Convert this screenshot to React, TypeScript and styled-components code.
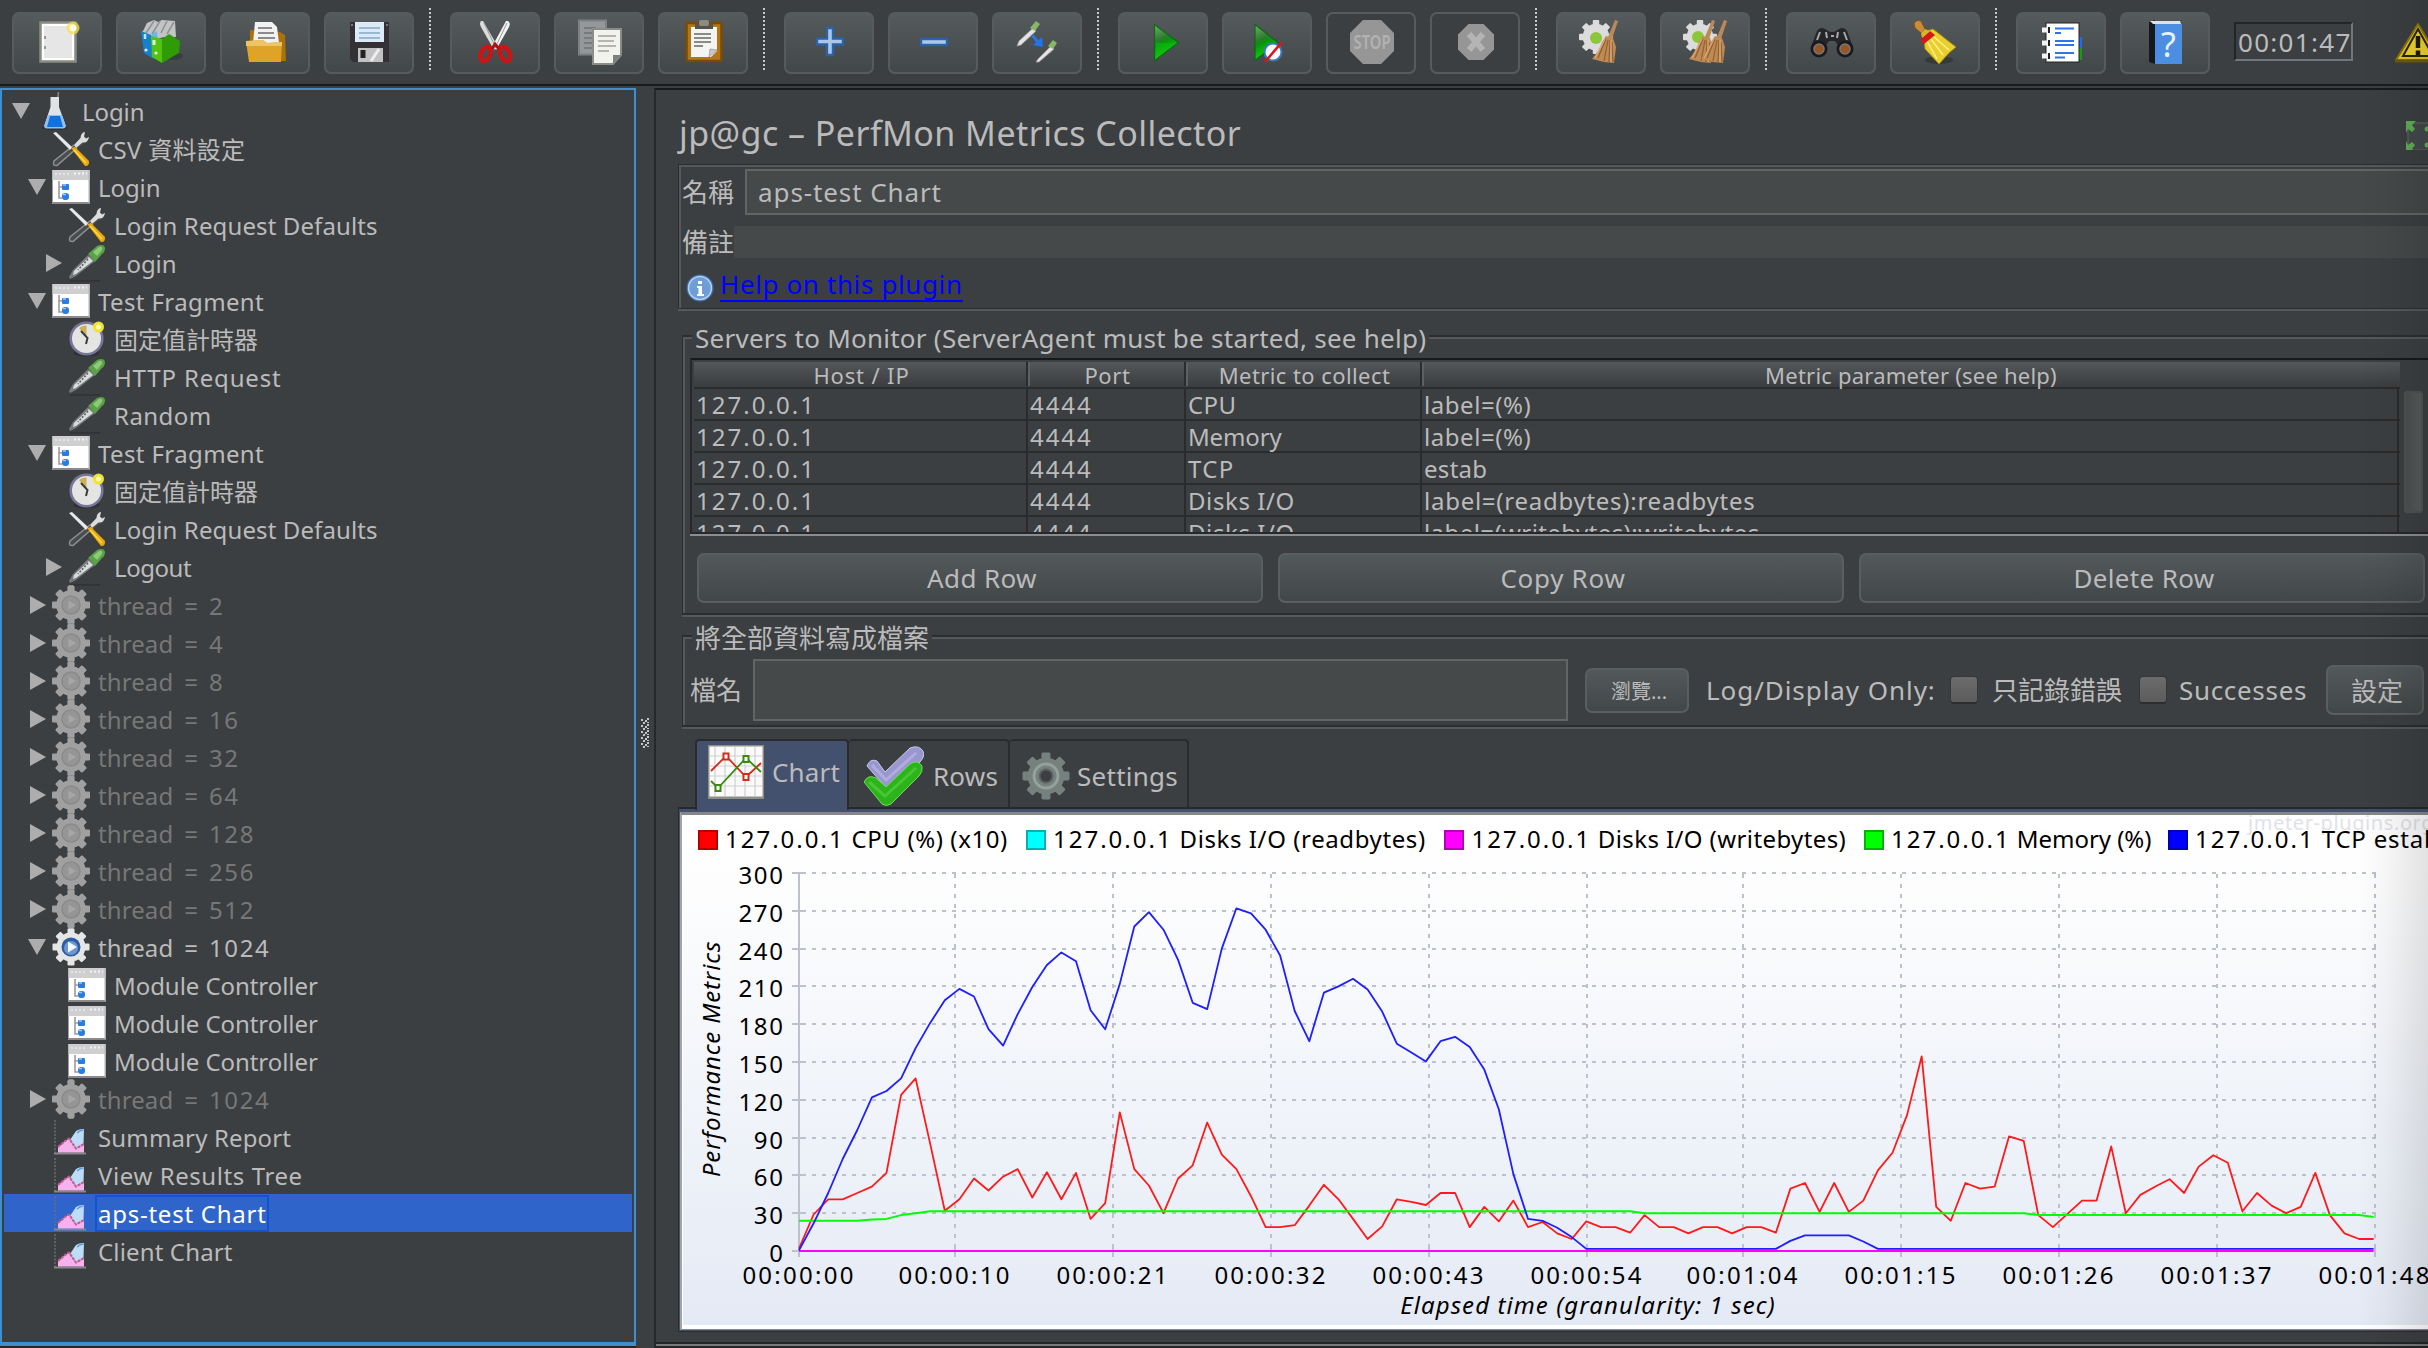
import React from 'react';
import styled, { createGlobalStyle, css } from 'styled-components';

/* ---------- theme ---------- */
const C = {
  bg: '#3c3f41',
  text: '#bbbbbb',
  muted: '#777777',
  dark: '#2b2d2f',
  light: '#55595c',
  field: '#45494a',
  fieldBorder: '#646464',
  focus: '#3e8fd0',
  select: '#2f65ca',
  grid: '#bcc1cd',
};
const FONT = '"Noto Sans", "Noto Sans CJK TC", sans-serif';

const Global = createGlobalStyle`
  html, body { margin: 0; padding: 0; background: ${C.bg}; overflow: hidden; }
  * { box-sizing: border-box; }
`;

const Frame = styled.div`
  position: relative;
  width: 2428px;
  height: 1348px;
  overflow: hidden;
  display: flex;
  flex-direction: column;
  background: ${C.bg};
  color: ${C.text};
  font-family: ${FONT};
  font-size: 26px;
  white-space: nowrap;
`;

const EdgeShade = styled.div`
  position: absolute;
  top: 0;
  right: 0;
  bottom: 0;
  width: 70px;
  pointer-events: none;
  background: linear-gradient(to right, rgba(0, 0, 0, 0), rgba(0, 0, 0, 0.03) 40%, rgba(0, 0, 0, 0.11));
`;

const Label = styled.span<{ $ls?: number; $size?: number }>`
  font-size: ${(p) => p.$size ?? 26}px;
  letter-spacing: ${(p) => p.$ls ?? 0}px;
`;

/* ---------- toolbar ---------- */
const Toolbar = styled.div`
  flex: none;
  display: flex;
  align-items: flex-start;
  height: 86px;
  padding: 12px 0 0 12px;
  border-bottom: 2px solid #191b1d;
`;
const ButtonGroup = styled.div`
  flex: none;
  display: flex;
  gap: 14px;
`;
const ToolButton = styled.button<{ $disabled?: boolean }>`
  width: 90px;
  height: 62px;
  padding: 0;
  display: flex;
  align-items: center;
  justify-content: center;
  border: 2px solid #575b5c;
  border-radius: 7px;
  background: ${(p) => (p.$disabled ? 'transparent' : 'linear-gradient(#555a5c, #424849)')};
`;
const Separator = styled.div`
  flex: none;
  width: 2px;
  height: 62px;
  margin: -4px 19px 0 15px;
  background: repeating-linear-gradient(#c9c9c9 0 2px, transparent 2px 4px);
`;
const Timer = styled.div`
  flex: none;
  width: 119px;
  height: 39px;
  margin: 10px 42px 0 24px;
  padding-left: 2px;
  border: 2px solid #232526;
  border-right-color: #70777a;
  border-bottom-color: #70777a;
  font-size: 26px;
  line-height: 36px;
  letter-spacing: 1.3px;
`;
const WarningBox = styled.div`
  flex: none;
  margin-top: 10px;
  height: 42px;
`;

/* ---------- body ---------- */
const Body = styled.div`
  display: flex;
  height: 1262px;
  padding-top: 2px;
`;
const Tree = styled.div`
  flex: none;
  width: 636px;
  height: 1258px;
  padding: 2px;
  border: 2px solid ${C.focus};
  border-bottom-width: 4px;
  box-shadow: 0 2px 0 #232526;
`;
const TreeRow = styled.div<{ $depth: number; $selected?: boolean; $muted?: boolean }>`
  display: flex;
  align-items: center;
  height: 38px;
  padding-left: ${(p) => 8 + 16 * p.$depth}px;
  background: ${(p) => (p.$selected ? C.select : 'transparent')};
  color: ${(p) => (p.$selected ? '#ffffff' : p.$muted ? C.muted : C.text)};
`;
const ArrowSlot = styled.div`
  flex: none;
  width: 18px;
  height: 18px;
  margin-right: 6px;
`;
const IconSlot = styled.div`
  flex: none;
  width: 38px;
  height: 38px;
`;
const TreeText = styled.div<{ $ls: number; $ws?: number; $selected?: boolean }>`
  height: 37px;
  line-height: 38px;
  margin-left: 5px;
  padding: 0 2px 0 3px;
  font-size: 24px;
  letter-spacing: ${(p) => p.$ls}px;
  word-spacing: ${(p) => p.$ws ?? 0}px;
  ${(p) => p.$selected && css`box-shadow: inset 0 0 0 2px #1352d4;`}
`;
const Digits = styled.span`
  letter-spacing: 1.6px;
`;
const Divider = styled.div`
  flex: none;
  width: 18px;
  display: flex;
  align-items: center;
  justify-content: center;
  padding-top: 29px;
`;

const Main = styled.div`
  flex: 1;
  min-width: 0;
  height: 1260px;
  overflow: hidden;
  padding-left: 22px;
  border-left: 2px solid #26282a;
  border-top: 2px solid #17191b;
  border-bottom: 2px solid #232526;
  box-shadow: inset 0 -2px 0 #77797c, inset 0 -4px 0 #232526;
  display: flex;
  flex-direction: column;
`;
const TitleBar = styled.div`
  flex: none;
  display: flex;
  height: 74px;
  padding: 12px 0 0 1px;
  line-height: 62px;
`;
const Expand = styled.div`
  margin-left: auto;
  margin-top: 12px;
  width: 22px;
  height: 36px;
  overflow: hidden;
`;
const HeaderBox = styled.div`
  flex: none;
  height: 145px;
  width: 1800px;
  padding: 4px 0 0 3px;
  border: 1px solid ${C.dark};
  box-shadow: inset 2px 2px 0 ${C.light}, 0 2px 0 ${C.light};
`;
const FieldRow = styled.div<{ $h: number; $mt?: number }>`
  display: flex;
  align-items: center;
  height: ${(p) => p.$h}px;
  margin-top: ${(p) => p.$mt ?? 0}px;
`;
const FieldLabel = styled.div`
  flex: none;
  width: 52px;
  line-height: 32px;
  font-size: 26px;
`;
const NameField = styled.div`
  flex: 1;
  height: 46px;
  margin-left: 11px;
  padding-left: 11px;
  line-height: 43px;
  border: 2px solid ${C.fieldBorder};
  background: ${C.field};
`;
const CommentField = styled.div`
  flex: 1;
  height: 32px;
  background: ${C.field};
`;
const HelpRow = styled.div`
  display: flex;
  margin-top: 11px;
  padding-left: 4px;
  gap: 6px;
  & svg { margin-top: 5px; }
`;
const HelpLink = styled.a`
  color: #0000ff;
  height: 33px;
  line-height: 30px;
  letter-spacing: 0.62px;
  border-bottom: 2px solid #0000ff;
`;

const Group = styled.div<{ $h: number; $mt: number }>`
  flex: none;
  display: flex;
  flex-direction: column;
  align-items: flex-start;
  width: 1780px;
  height: ${(p) => p.$h}px;
  margin: ${(p) => p.$mt}px 0 0 4px;
  border: solid ${C.dark};
  border-width: 2px 1px 2px 1px;
  box-shadow: inset 2px 2px 0 ${C.light}, 0 2px 0 ${C.light};
`;
const Legend = styled.div`
  flex: none;
  height: 30px;
  line-height: 31px;
  margin: -14px 0 0 9px;
  padding: 0 3px 0 3px;
  background: ${C.bg};
`;

/* ---------- table ---------- */
const TableFrame = styled.div`
  flex: none;
  display: flex;
  width: 1738px;
  height: 176px;
  margin: 5px 0 0 7px;
  padding: 2px 0 0 2px;
  overflow: hidden;
  border: solid #26282a;
  border-width: 2px 0 2px 2px;
  border-top-color: #17191b;
`;
const TableEdge = styled.div`
  flex: none;
  width: 1738px;
  height: 2px;
  margin-left: 7px;
  background: #8b8d90;
`;
const TableGrid = styled.div`
  flex: none;
  width: 1706px;
`;
const COLS = '334px 158px 236px 978px';
const HeadRow = styled.div`
  display: grid;
  grid-template-columns: ${COLS};
  height: 27px;
  background: linear-gradient(#54585b, #3a3c3e);
  border-bottom: 2px solid #2a2c2d;
`;
const HeadCell = styled.div<{ $ls: number; $last?: boolean }>`
  height: 24px;
  line-height: 27px;
  padding-left: ${(p) => (p.$last ? 0 : 3)}px;
  text-align: center;
  font-size: 22px;
  letter-spacing: ${(p) => p.$ls}px;
  ${(p) => !p.$last && css`border-right: 2px solid #2a2c2d; box-shadow: 2px 0 0 #5c6063;`}
`;
const BodyRow = styled.div`
  display: grid;
  grid-template-columns: ${COLS};
  height: 32px;
  border-bottom: 2px solid #2b2b2b;
`;
const Cell = styled.div<{ $ls: number; $last?: boolean }>`
  height: 30px;
  line-height: 32px;
  padding-left: 2px;
  font-size: 24px;
  letter-spacing: ${(p) => p.$ls}px;
  border-right: 2px solid #2b2b2b;
  ${(p) => p.$last && css`margin-right: 1px;`}
`;
const Scroll = styled.div`
  flex: none;
  width: 30px;
  padding: 29px 0 0 4px;
`;
const Thumb = styled.div`
  width: 19px;
  height: 122px;
  border: 2px solid #4f5253;
  border-radius: 3px;
  background: linear-gradient(to right, #4c4e50, #595b5c);
`;

const RowButtons = styled.div`
  display: flex;
  gap: 15px;
  margin: 17px 0 0 14px;
`;
const Button = styled.button<{ $w: number; $h: number; $ml?: number }>`
  flex: none;
  width: ${(p) => p.$w}px;
  height: ${(p) => p.$h}px;
  margin: 0 0 0 ${(p) => p.$ml ?? 0}px;
  padding: 0 0 0 4px;
  color: ${C.text};
  font-family: ${FONT};
  border: 2px solid #5a5e5f;
  border-radius: 7px;
  background: linear-gradient(#53585a, #424849);
`;
const FileRow = styled.div`
  display: flex;
  align-items: center;
  height: 62px;
  margin: 6px 0 0 7px;
`;
const FileField = styled.div`
  flex: none;
  width: 815px;
  height: 62px;
  margin-left: 11px;
  border: 2px solid ${C.fieldBorder};
  background: ${C.field};
`;
const Spaced = styled.div<{ $w: number; $ml: number }>`
  flex: none;
  width: ${(p) => p.$w}px;
  margin-left: ${(p) => p.$ml}px;
  line-height: 62px;
`;
const Check = styled.div<{ $ml: number }>`
  flex: none;
  width: 28px;
  height: 28px;
  margin-left: ${(p) => p.$ml}px;
  border-radius: 4px;
  border: 1px solid #343638;
  border-bottom: 2px solid #2b2d2e;
  background: linear-gradient(#6c6c6c, #5c5c5c);
`;

/* ---------- tabs ---------- */
const Tabs = styled.div`
  flex: none;
  display: flex;
  height: 68px;
  margin: 12px 0 0 17px;
`;
const Tab = styled.div<{ $w: number; $active?: boolean; $gap: number; $pl: number }>`
  flex: none;
  display: flex;
  align-items: center;
  gap: ${(p) => p.$gap}px;
  width: ${(p) => p.$w}px;
  padding-top: 4px;
  padding-left: ${(p) => p.$pl}px;
  border: 2px solid #292b2d;
  border-bottom: 0;
  border-left-width: ${(p) => (p.$active ? 2 : 0)}px;
  border-radius: 4px 4px 0 0;
  background: ${(p) => (p.$active ? '#43506e' : C.bg)};
  ${(p) => p.$active && css`height: 71px; z-index: 1; padding-top: 0; padding-bottom: 7px;`}
`;
const Pane = styled.div`
  flex: none;
  width: 1760px;
  height: 525px;
  padding: 3px 0 0 1px;
  border: 1px solid ${C.dark};
  border-top: 2px solid #26282a;
  background: #43506e;
`;
const ChartFrame = styled.div`
  width: 1750px;
  height: 518px;
  border: solid #86868c;
  border-width: 3px 0 1px 2px;
  border-left-color: #a4a4a8;
  background: #ffffff;
  & svg { display: block; }
`;

/* ---------- toolbar icons (48 x 48) ---------- */
const Svg48 = ({ children }: { children: React.ReactNode }) => (
  <svg width="48" height="48" viewBox="0 0 48 48">{children}</svg>
);
const Cog = ({ cx, cy, r, fill, hole, n = 8 }: { cx: number; cy: number; r: number; fill: string; hole?: string; n?: number }) => (
  <g transform={`translate(${cx} ${cy})`}>
    {Array.from({ length: n }, (_, i) => (
      <rect key={i} x={-r * 0.19} y={-r} width={r * 0.38} height={r * 0.5} rx={r * 0.06} fill={fill} transform={`rotate(${(i * 360) / n})`} />
    ))}
    <circle r={r * 0.78} fill={fill} />
    {hole && <circle r={r * 0.4} fill={hole} />}
  </g>
);
const Broomlet = ({ x }: { x: number }) => (
  <g transform={`translate(${x} 0)`}>
    <path d="M36 1 L39 2 L33 20 L29 18 Z" fill="#b98a58" />
    <path d="M27 17 L34 19 L37 28 L35 44 L25 43 L13 40 Q20 32 23 23 Z" fill="#c08a55" />
    <path d="M27 20 L19 39 M29 21 L25 42 M31 21 L30 43 M33 23 L34 43" stroke="#8f6133" strokeWidth="1.2" fill="none" />
    <path d="M26 20 L16 39 M32 21 L32 43" stroke="#e0b283" strokeWidth="1" fill="none" />
  </g>
);

const ICONS: Record<string, React.ReactNode> = {
  new: (
    <>
      <rect x="7.500" y="3.500" width="35" height="39" fill="#f1f1f1" stroke="#8a8c82" strokeWidth="2.500" />
      <rect x="10" y="6" width="30" height="34" fill="#e6e6e6" stroke="#ffffff" strokeWidth="2" />
      <path d="M12 17v3M12 27v3" stroke="#999" strokeWidth="2" />
      <circle cx="40" cy="9" r="6.500" fill="#f3e14a" opacity="0.75" />
      <circle cx="40" cy="9" r="3.500" fill="#fffbe0" />
    </>
  ),
  templates: (
    <>
      <ellipse cx="36" cy="37" rx="10" ry="4" fill="#2c2f30" opacity="0.5" />
      <path d="M6 12 L10 4 L17 1 L21 3 L25 1 L38 2 L39 18 L28 18 L18 20 L4 13 Z" fill="#c2c4c6" />
      <path d="M9 14L17 2M15 15L23 2M24 14L30 2M30 15L37 3" stroke="#8f9294" strokeWidth="1.500" />
      <path d="M4 12 L14 16 L17 40 L7 34 Z" fill="#1481cf" />
      <path d="M14 16 L20 12 L21 24 L16 36 Z" fill="#64b8ee" />
      <path d="M14 17 L25 20 L25 44 L15 38 Z" fill="#52c40e" />
      <path d="M25 20 L32 15 L43 22 L42 34 L25 44 Z" fill="#2f9c06" />
      <path d="M17 21v5" stroke="#d8ffd0" strokeWidth="3" />
      <path d="M8 15v5" stroke="#bfe4ff" strokeWidth="2.500" />
      <circle cx="19" cy="34" r="1.600" fill="#e6ffe0" /><circle cx="9" cy="31" r="1.600" fill="#d7efff" />
    </>
  ),
  open: (
    <>
      <path d="M9 11 L39 13 L44 16 L45 42 L9 42 Z" fill="#a9720c" />
      <path d="M14 3 L31 3 L36 8 L38 24 L12 24 Z" fill="#f2f2f2" />
      <path d="M17 9h14M17 14h16M17 19h17" stroke="#8c8c8c" strokeWidth="2" />
      <path d="M5 22 L22 21 L26 24 L41 23 L40 43 L8 43 Z" fill="#dfa327" />
      <path d="M5 22 L22 21 L26 24 L41 23 L41 27 L5 27 Z" fill="#eec566" />
    </>
  ),
  save: (
    <>
      <path d="M5 3 H44 V43 H8 L5 40 Z" fill="#333135" />
      <rect x="10" y="3" width="29" height="20" fill="#dce9f7" />
      <path d="M14 9h21M14 14h21M14 19h21" stroke="#9ab8d4" strokeWidth="2" />
      <rect x="13" y="29" width="25" height="14" fill="#c2c2c4" />
      <rect x="15.500" y="31" width="5" height="8" fill="#222" />
      <path d="M26 42L34 30" stroke="#eee" strokeWidth="3" />
      <path d="M7 5v2M42 5v2" stroke="#777" strokeWidth="2" />
    </>
  ),
  cut: (
    <>
      <path d="M10 2 Q8 4 10 8 L23 31 L26 26 L12 2 Z" fill="#dcdcdc" />
      <path d="M37 2 Q40 4 38 8 L25 31 L22 26 L35 2 Z" fill="#f2f2f2" />
      <path d="M13 4L25 29M36 4L24 29" stroke="#9a9a9a" strokeWidth="1" />
      <ellipse cx="14.500" cy="35" rx="4.600" ry="7.600" transform="rotate(24 14.500 35)" fill="none" stroke="#cc1414" strokeWidth="4.400" />
      <ellipse cx="34" cy="35" rx="4.600" ry="7.600" transform="rotate(-24 34 35)" fill="none" stroke="#cc1414" strokeWidth="4.400" />
      <path d="M21 30L24 25L28 30" stroke="#b01010" strokeWidth="3" fill="none" />
    </>
  ),
  copy: (
    <>
      <rect x="4" y="1.500" width="27" height="34" fill="#94989a" stroke="#7d8183" strokeWidth="2" />
      <path d="M9 9h12M9 14h8M9 19h8M9 24h8M9 29h8" stroke="#777b7d" strokeWidth="2" />
      <path d="M18 10 H46 V36 L38 45 H18 Z" fill="#f2f2ee" stroke="#8b8c84" strokeWidth="2" />
      <path d="M23 17h18M23 22h16M23 27h18M23 32h11" stroke="#b5b5b0" strokeWidth="2" />
      <path d="M46 36 L38 36 L38 45 Z" fill="#7e807c" />
    </>
  ),
  paste: (
    <>
      <rect x="7.500" y="4" width="35" height="38" rx="1.500" fill="#b47614" stroke="#7a4a06" strokeWidth="2.500" />
      <path d="M12 8 H38 V32 L32 38 H12 Z" fill="#f4f4f2" />
      <rect x="16" y="5" width="18" height="5" fill="#55534c" />
      <rect x="20" y="1" width="10" height="6" rx="2" fill="#8e8c80" />
      <path d="M15 15h17M15 19h17M15 23h17M15 27h9" stroke="#8a8a86" strokeWidth="1.800" />
      <path d="M38 31 L31 30 L30 38 Z" fill="#c9c9c4" stroke="#888" strokeWidth="0.600" />
    </>
  ),
  plus: <path d="M22.500 9.500h6v10.500h10v6h-10v10.500h-6v-10.500h-10v-6h10z" fill="#aac7e8" stroke="#2c62a6" strokeWidth="2.400" transform="translate(-0.500 -0.500)" />,
  minus: <rect x="12" y="20" width="26" height="6" fill="#aac7e8" stroke="#2c62a6" strokeWidth="2.400" />,
  toggle: (
    <>
      <path d="M20 9 L23 12 L8 26 L4 27 L6 22 Z" fill="#e4e4e4" stroke="#999" strokeWidth="0.800" />
      <path d="M17 9 L23 2 L27 5 L22 12 Z" fill="#86b868" />
      <path d="M38 27 L41 30 L26 43 L23 43 L25 40 Z" fill="#e4e4e4" stroke="#999" strokeWidth="0.800" />
      <path d="M35 27 L40 21 L44 24 L40 30 Z" fill="#86b868" />
      <path d="M19 16 L25 23" stroke="#2f76e0" strokeWidth="3" />
      <path d="M29 18 L30 28 L20 26 Z" fill="#2274ee" />
    </>
  ),
  play: (
    <>
      <path d="M15.500 5.500 L39.500 23.500 L15.500 41.500 Z" fill="url(#play)" stroke="#0c6b10" strokeWidth="1.200" />
      <path d="M17 24 H38 L17 40 Z" fill="#10c010" opacity="0.450" />
    </>
  ),
  playNoTimers: (
    <>
      <path d="M12 5.500 L35 23.500 L12 41.500 Z" fill="url(#play)" stroke="#0c6b10" strokeWidth="1.200" />
      <circle cx="30" cy="33" r="8.500" fill="#f4f8ff" stroke="#3a78b8" strokeWidth="2" />
      <path d="M39 23 L22 43" stroke="#d81818" strokeWidth="2.600" />
    </>
  ),
  stop: (
    <>
      <path d="M16 1 H34 L47 14 V32 L34 45 H16 L3 32 V14 Z" fill="#969696" />
      <text x="25" y="30" textAnchor="middle" fontFamily={FONT} fontWeight="600" fontSize="20" textLength="37" lengthAdjust="spacingAndGlyphs" fill="#b2b2b2">STOP</text>
    </>
  ),
  shutdown: (
    <>
      <path d="M17.500 5 H32.500 L43 15.500 V30.500 L32.500 41 H17.500 L7 30.500 V15.500 Z" fill="#969696" />
      <path d="M18 15L32 31M32 15L18 31" stroke="#b4b4b4" strokeWidth="6" />
    </>
  ),
  clear: (
    <>
      <Cog cx={19} cy={18} r={17} fill="#dcdcdc" />
      <circle cx="19" cy="19" r="6" fill="#8cc63a" />
      <Broomlet x={2} />
    </>
  ),
  clearAll: (
    <>
      <Cog cx={19} cy={18} r={17} fill="#dcdcdc" />
      <circle cx="17" cy="18" r="6" fill="#8cc63a" />
      <Broomlet x={-5} />
      <Broomlet x={7} />
    </>
  ),
  search: (
    <>
      <path d="M10 12 Q13 7 18 10 L23 13 H27 L32 10 Q37 7 40 12 L46 28 L34 30 L28 22 H22 L16 30 L4 28 Z" fill="#26262a" />
      <circle cx="12" cy="30" r="8.500" fill="#1b1b1e" /><circle cx="38" cy="30" r="8.500" fill="#1b1b1e" />
      <circle cx="12" cy="30" r="5" fill="#9c5420" stroke="#77777c" strokeWidth="1.500" /><circle cx="38" cy="30" r="5" fill="#9c5420" stroke="#77777c" strokeWidth="1.500" />
      <path d="M13 13 L10 21M19 13L20 19M37 13L40 21M31 13L30 19M24 17h3" stroke="#a9a9ad" strokeWidth="2" />
    </>
  ),
  broom: (
    <>
      <ellipse cx="28" cy="41" rx="14" ry="4" fill="#2a2d2e" opacity="0.600" />
      <path d="M12 13 L22 10 L45 28 L38 34 L28 45 L14 30 Z" fill="#e9cf2e" stroke="#a38a10" strokeWidth="1" />
      <path d="M16 22L26 40M20 20L32 36M23 18L38 31" stroke="#fff08a" strokeWidth="1.500" />
      <path d="M9 21 L19 12 L24 16 L13 25 Z" fill="#d3181c" />
      <path d="M3 4 Q6 0 10 2 L14 10 L10 14 L4 9 Z" fill="#c98b3c" stroke="#7e5217" strokeWidth="1" />
      <path d="M10 14L14 10L19 12L11 19Z" fill="#d6b52a" />
    </>
  ),
  list: (
    <>
      <path d="M40 18h5v11h-5z" fill="#1d6df0" /><path d="M40 29h5v12h-5z" fill="#179a17" />
      <rect x="9" y="4" width="33" height="39" fill="#ffffff" stroke="#222" strokeWidth="1" />
      <path d="M5 11h8M5 24h8M5 37h8" stroke="#f2f2f2" strokeWidth="5" />
      <path d="M12 8v6M12 21v6M12 34v6" stroke="#222" strokeWidth="2" />
      <path d="M18 9.500h19M18 14h6M18 22h19M18 26h19M18 34h19M18 38.500h10" stroke="#2f75e8" strokeWidth="2" />
    </>
  ),
  help: (
    <>
      <path d="M8 3 L14 1 V45 L8 43 Z" fill="#16191c" />
      <rect x="14" y="5" width="27" height="40" fill="#4c8ee2" />
      <path d="M9 2h30l1 3H12z" fill="#dfe3e6" />
      <text x="27.500" y="38" textAnchor="middle" fontFamily={FONT} fontSize="34" fill="#e9f3ff">?</text>
    </>
  ),
};

const TOOLBAR: { name: string; disabled?: boolean }[][] = [
  [{ name: 'new' }, { name: 'templates' }, { name: 'open' }, { name: 'save' }],
  [{ name: 'cut' }, { name: 'copy' }, { name: 'paste' }],
  [{ name: 'plus' }, { name: 'minus' }, { name: 'toggle' }],
  [{ name: 'play' }, { name: 'playNoTimers' }, { name: 'stop', disabled: true }, { name: 'shutdown', disabled: true }],
  [{ name: 'clear' }, { name: 'clearAll' }],
  [{ name: 'search' }, { name: 'broom' }],
  [{ name: 'list' }, { name: 'help' }],
];

/* ---------- tree icons (38 x 38) ---------- */
const TREE_ICONS: Record<string, React.ReactNode> = {
  flask: (
    <>
      <ellipse cx="19" cy="36" rx="13" ry="2" fill="#25282a" opacity="0.600" />
      <path d="M22.500 0L21.500 8" stroke="#85888a" strokeWidth="1.500" />
      <path d="M14.500 5 H23 V15 L29.500 33 Q30 36 27 36 H10.500 Q8 36 8.500 33 L14.500 15 Z" fill="#dfe3e6" />
      <path d="M12 23 H26 L29.500 33 Q30 36.500 27 36.500 H10.500 Q8 36.500 8.500 33 Z" fill="#8fc0f5" />
      <path d="M14 24 H24 L27 35 H11 Z" fill="#1272dd" />
    </>
  ),
  tools: (
    <>
      <path d="M28 9 Q28 3 33 1.500 L32 6 L34 8 L37 6.500 Q37 13 31 14 L6 36 L1 36 L1 31 Z" fill="#4a4d4f" />
      <path d="M28.500 8 Q29 2.500 33 2 L32 6.500 L34 8.500 L37 7 Q36 13 30.500 12.500 L24 18 L22 15 Z" fill="#dcdcdc" />
      <path d="M22 15 L2 31 Q0 36 5 35.500 L25 18" fill="none" stroke="#8d8f90" strokeWidth="1.500" />
      <path d="M1 3 L4 2 L20 17 L18 20 Z" fill="#e8e8e8" />
      <path d="M19 18 L23 17 L37 31 Q37.500 36.500 33 36 Z" fill="#e9a908" />
      <path d="M22 20 L34 33" stroke="#ffd950" strokeWidth="1.600" />
    </>
  ),
  controller: (
    <>
      <rect x="0.500" y="2" width="37" height="34" fill="#ffffff" />
      <rect x="0.500" y="2" width="37" height="10" fill="#cfcfd2" />
      <path d="M3 6h16" stroke="#e4e4e6" strokeWidth="2" strokeDasharray="2 2" />
      <path d="M22 5.500h13" stroke="#f3f3f4" strokeWidth="2" strokeDasharray="2 2" />
      <path d="M0.500 35h37" stroke="#8a8a8c" strokeWidth="2" />
      <path d="M37 2v33" stroke="#b5b5b7" strokeWidth="1" />
      <path d="M7 13v17h3M7 19h3" stroke="#9c9c9e" strokeWidth="1.600" fill="none" />
      <rect x="10" y="16" width="7" height="6" rx="1" fill="#2b7ce0" />
      <rect x="10" y="25" width="7" height="7" rx="3" fill="#2b7ce0" />
      <path d="M11 17h3M11 26.500h3" stroke="#9cc8fa" strokeWidth="1.500" />
    </>
  ),
  pipette: (
    <>
      <path d="M2 37h30" stroke="#2a2c2e" strokeWidth="1.500" opacity="0.700" />
      <path d="M20 11 L27 17 L8 32 L2 35 L1 33 L5 26 Z" fill="#77797a" />
      <path d="M21 13 L25 17 L8 30 L5 31 L6 27 Z" fill="#d9dcdc" />
      <path d="M20 15 L10 26" stroke="#5c5e5f" strokeWidth="1.600" strokeDasharray="2 1.500" />
      <path d="M20 10 L29 2 Q36 -1 37 4 Q37 8 34 10 L27 18 Z" fill="#5aa14a" />
      <path d="M25 8 L31 3 Q35 2 34 6 L29 12 Z" fill="#8cca76" />
    </>
  ),
  clock: (
    <>
      <ellipse cx="18.500" cy="33" rx="13" ry="3.500" fill="#25272a" opacity="0.600" />
      <circle cx="18.500" cy="18.500" r="15.800" fill="#e4e4e2" stroke="#77769a" strokeWidth="2.600" />
      <path d="M18.500 18 L11 8 Q14 5 18.500 5.500 Z" fill="#c9b25a" />
      <path d="M13 11 L19.500 18 L18 24" stroke="#3a3a3a" strokeWidth="2" fill="none" />
      <circle cx="30.500" cy="7" r="5.500" fill="#f1e22c" />
      <circle cx="30.500" cy="7" r="2.500" fill="#fffbc0" />
    </>
  ),
  gearOff: (
    <>
      <path d="M19 -1v40" stroke="#8c8c8c" strokeWidth="5" />
      <Cog cx={19} cy={19} r={19} fill="#a0a0a0" />
      <circle cx="19" cy="19" r="9" fill="#959595" stroke="#8a8a8a" strokeWidth="1.500" />
      <path d="M16.500 14.500 L24 19 L16.500 23.500 Z" fill="#a6a6a6" />
    </>
  ),
  gearOn: (
    <>
      <Cog cx={19} cy={19} r={18.5} fill="#e6e6e6" />
      <circle cx="19" cy="19" r="9.500" fill="#2e5da4" />
      <circle cx="19" cy="20" r="7" fill="#6d97cf" />
      <path d="M16 13.500 L25 19 L16 24.500 Z" fill="#f2f7ff" />
    </>
  ),
  listener: (
    <>
      <path d="M3 2v34" stroke="#6c6e70" strokeWidth="1.500" strokeDasharray="2 1.500" />
      <path d="M2 35.500h32" stroke="#85878a" strokeWidth="2" />
      <path d="M18 22 L24 13 Q28 10.500 32 11 L31.500 26 L24 30.500 Z" fill="#bcdcf8" />
      <path d="M25 15 Q28 12 31.500 12" stroke="#5f9ee0" strokeWidth="1.500" fill="none" />
      <path d="M6 34.500 V29 L13 23 L17 20.500 L24 30.500 L32 26 V34.500 Z" fill="#f5b2ec" />
      <path d="M6 29 L13 23 L17 20.500 L24 30.500 L32 26" stroke="#c25a90" strokeWidth="2" fill="none" strokeDasharray="3 1" />
    </>
  ),
};

type Node = { d: number; t: string; i: string; ls: number; num?: string; a?: 'open' | 'closed'; muted?: boolean; sel?: boolean };
const thread = (num: string): Node => ({ d: 1, t: 'thread = ', num, i: 'gearOff', ls: 0.1, a: 'closed', muted: true });
const NODES: Node[] = [
  { d: 0, t: 'Login', i: 'flask', ls: -0.1, a: 'open' },
  { d: 1, t: 'CSV 資料設定', i: 'tools', ls: 0.3 },
  { d: 1, t: 'Login', i: 'controller', ls: -0.1, a: 'open' },
  { d: 2, t: 'Login Request Defaults', i: 'tools', ls: 0.12 },
  { d: 2, t: 'Login', i: 'pipette', ls: -0.1, a: 'closed' },
  { d: 1, t: 'Test Fragment', i: 'controller', ls: 0.38, a: 'open' },
  { d: 2, t: '固定值計時器', i: 'clock', ls: 0 },
  { d: 2, t: 'HTTP Request', i: 'pipette', ls: 0.84 },
  { d: 2, t: 'Random', i: 'pipette', ls: 0.45 },
  { d: 1, t: 'Test Fragment', i: 'controller', ls: 0.38, a: 'open' },
  { d: 2, t: '固定值計時器', i: 'clock', ls: 0 },
  { d: 2, t: 'Login Request Defaults', i: 'tools', ls: 0.12 },
  { d: 2, t: 'Logout', i: 'pipette', ls: -0.45, a: 'closed' },
  thread('2'),
  thread('4'),
  thread('8'),
  thread('16'),
  thread('32'),
  thread('64'),
  thread('128'),
  thread('256'),
  thread('512'),
  { d: 1, t: 'thread = ', num: '1024', i: 'gearOn', ls: 0.1, a: 'open' },
  { d: 2, t: 'Module Controller', i: 'controller', ls: -0.06 },
  { d: 2, t: 'Module Controller', i: 'controller', ls: -0.06 },
  { d: 2, t: 'Module Controller', i: 'controller', ls: -0.06 },
  thread('1024'),
  { d: 1, t: 'Summary Report', i: 'listener', ls: 0.15 },
  { d: 1, t: 'View Results Tree', i: 'listener', ls: 0.58 },
  { d: 1, t: 'aps-test Chart', i: 'listener', ls: 0.75, sel: true },
  { d: 1, t: 'Client Chart', i: 'listener', ls: 0.15 },
];

const Arrow = ({ kind }: { kind: 'open' | 'closed' }) => (
  <svg width="18" height="18" viewBox="0 0 18 18" style={{ display: 'block' }}>
    <path d={kind === 'open' ? 'M0 1 H18 L9 17 Z' : 'M2 0 L18 9 L2 18 Z'} fill="#adadad" />
  </svg>
);

/* ---------- table data ---------- */
const HEAD: [string, number][] = [['Host / IP', 0.85], ['Port', 0.63], ['Metric to collect', 0.42], ['Metric parameter (see help)', 0.22]];
const ROWS: [string, number, string, number][] = [
  ['CPU', 0.4, 'label=(%)', 0.55],
  ['Memory', -0.15, 'label=(%)', 0.55],
  ['TCP', 1.3, 'estab', 0.3],
  ['Disks I/O', 0.6, 'label=(readbytes):readbytes', 0.74],
  ['Disks I/O', 0.6, 'label=(writebytes):writebytes', 0.42],
];

/* ---------- chart ---------- */
const X0 = 799;
const STEP = 14.58;
const Y0 = 1251;
const UNIT = 1.26;
const fill = (v: number, n: number) => Array<number>(n).fill(v);
const CPU = [
  2, 29, 41, 41, 46, 51, 62, 124, 137, 85, 32, 41, 57.5, 48, 59, 65, 42.5, 62.5, 41, 62, 25.5, 38, 110, 65, 52, 30, 57.5, 68, 102,
  76.5, 65, 43.5, 19, 19, 20.5, 36, 52.5, 41, 25.5, 9.5, 19.5, 41, 39, 36.5, 46, 46, 19, 35, 23.5, 40, 19, 23, 14, 9.5, 23.5, 19,
  19, 14.5, 28.5, 19, 19, 14, 19, 19, 14, 19, 19, 14.5, 49.5, 54, 31, 54, 31, 40, 64, 78, 108, 154.5, 35, 24, 54, 49.5, 51, 91,
  87.5, 28.5, 19, 29.5, 40, 40, 83, 30, 44.5, 51, 57, 46, 67, 76, 70, 31.5, 46, 36, 30, 35, 62, 28.5, 14, 9.5, 9.5,
];
const TCP = [
  0.5, 22, 46, 73, 96, 122, 127, 137, 161, 181, 199, 208, 202, 176, 163, 188, 209.5, 227, 237, 230, 191, 176, 212, 257.5, 269, 255,
  231, 197, 192, 240, 272, 268, 255, 234.5, 190.5, 166.5, 205, 210, 216, 207.5, 190, 164.5, 157.5, 150.5, 166.5, 170, 162, 144,
  112.5, 61, 25.5, 24, 18.5, 11, ...fill(1.7, 14), 8, 12.5, 12.5, 12.5, 12.5, 7.5, ...fill(1.7, 35),
];
const MEM = [...fill(24, 5), 25, 25.5, 28.5, 30, ...fill(31.6, 49), ...fill(30, 27), ...fill(28.6, 23), 27];
const DISK = fill(0, 109);
const line = (vals: number[]) => vals.map((v, i) => `${(X0 + i * STEP).toFixed(1)},${(Y0 - v * UNIT).toFixed(1)}`).join(' ');

const Y_TICKS = [0, 30, 60, 90, 120, 150, 180, 210, 240, 270, 300];
const X_TICKS: [string, number][] = [
  ['00:00:00', 799], ['00:00:10', 955], ['00:00:21', 1113], ['00:00:32', 1271], ['00:00:43', 1429], ['00:00:54', 1587],
  ['00:01:04', 1743], ['00:01:15', 1901], ['00:01:26', 2059], ['00:01:37', 2217], ['00:01:48', 2375],
];
const HOST = '127.0.0.1';
const LEGEND: [string, string, string, number, number, number][] = [
  [' CPU (%) (x10)', '#ff0000', '#b40000', 698, 725, 0.6],
  [' Disks I/O (readbytes)', '#00ffff', '#00b0b4', 1026, 1053, 0.6],
  [' Disks I/O (writebytes)', '#ff00ff', '#b400b4', 1444, 1471.5, 0.4],
  [' Memory (%)', '#00ff00', '#00b400', 1864, 1891, -0.05],
  [' TCP estab', '#0000ff', '#0000b4', 2168, 2195, 0.8],
];

const Chart = () => (
  <svg width="1746" height="514" viewBox="682 815 1746 514" fontFamily={FONT} fontSize="24">
    <defs>
      <linearGradient id="plot" x1="0" y1="0" x2="0" y2="1">
        <stop offset="0" stopColor="#ffffff" />
        <stop offset="0.100" stopColor="#fefefe" />
        <stop offset="1" stopColor="#e4eaf5" />
      </linearGradient>
    </defs>
    <rect x="683" y="815" width="1745" height="510" fill="url(#plot)" />
    <text x="2248" y="829.5" fontSize="20" letterSpacing="0.600" fill="#dfe2e8">jmeter-plugins.org</text>
    {LEGEND.map(([name, color, edge, sx, tx, ls]) => (
      <g key={name}>
        <rect x={sx + 1} y="831" width="18" height="18" fill={color} stroke={edge} strokeWidth="2" />
        <text x={tx} y="847.5" letterSpacing={ls} fill="#000" xmlSpace="preserve"><tspan letterSpacing="2">{HOST}</tspan>{name}</text>
      </g>
    ))}
    <g stroke={C.grid} strokeWidth="2">
      {Y_TICKS.map((v) => {
        const y = Math.round(Y0 - v * UNIT);
        return (
          <g key={v}>
            <path d={`M792 ${y}H802`} />
            <path d={`M802 ${y}H2376`} strokeDasharray="4 6" />
          </g>
        );
      })}
      {X_TICKS.map(([t, x]) => (
        <g key={t}>
          {x > X0 && <path d={`M${x} 874V1246`} strokeDasharray="4 6" />}
          <path d={`M${x} 1246V1257`} />
        </g>
      ))}
      <path d={`M${X0} 872V1257`} />
    </g>
    {Y_TICKS.map((v) => (
      <text key={v} x="784.5" y={Math.round(Y0 - v * UNIT) + 10.5} textAnchor="end" letterSpacing="1.600" fill="#000">{v}</text>
    ))}
    {X_TICKS.map(([t, x]) => (
      <text key={t} x={x} y="1284" textAnchor="middle" letterSpacing="2.250" fill="#000">{t}</text>
    ))}
    <text x="1588" y="1313.5" textAnchor="middle" fontStyle="italic" letterSpacing="1.070" fill="#000">Elapsed time (granularity: 1 sec)</text>
    <text transform="translate(720 1059) rotate(-90)" textAnchor="middle" fontStyle="italic" letterSpacing="0.820" fill="#000">Performance Metrics</text>
    <g fill="none" strokeWidth="2" strokeLinejoin="round">
      <polyline points={line(CPU)} stroke="#ff1a1a" strokeWidth="1.800" />
      <polyline points={line(DISK)} stroke="#ff00ff" />
      <polyline points={line(MEM)} stroke="#00ff00" />
      <polyline points={line(TCP)} stroke="#1e1eff" strokeWidth="1.800" />
    </g>
  </svg>
);

const ChartTabIcon = () => (
  <svg width="56" height="54" viewBox="0 0 56 54">
    <rect x="0" y="0" width="56" height="54" fill="#8e8e86" />
    <rect x="1.500" y="1.500" width="53" height="50" fill="#fafafa" />
    <path d="M7 2v49M17 2v49M27 2v49M37 2v49M47 2v49M2 11h52M2 21h52M2 31h52M2 41h52" stroke="#cfcfcf" strokeWidth="1.200" />
    <path d="M3 26L18 11L38 32L53 18" stroke="#d42a1a" strokeWidth="1.800" fill="none" />
    <path d="M3 36L10 43L38 13L53 27" stroke="#3a8a10" strokeWidth="1.800" fill="none" />
    <g fill="#fff" strokeWidth="2"><rect x="15.500" y="8.500" width="5" height="6" stroke="#d42a1a" /><rect x="35.500" y="29" width="5" height="6" stroke="#d42a1a" /><rect x="7.500" y="40" width="5" height="6" stroke="#3a8a10" /><rect x="35.500" y="11" width="5" height="6" stroke="#3a8a10" /></g>
  </svg>
);
const RowsTabIcon = () => (
  <svg width="60" height="60" viewBox="0 0 60 60">
    <path d="M3 20 Q6 12 13 15 L21 26 L46 2 Q56 -2 60 7 Q60 12 56 16 L24 44 Z" fill="#9a97cf" stroke="#c9c7ea" strokeWidth="1" />
    <path d="M0 36 Q4 28 12 32 L22 41 L46 18 Q54 13 58 20 Q59 26 55 30 L27 58 Q22 61 18 58 Z" fill="#2cb41a" stroke="#6fdc58" strokeWidth="1" />
    <path d="M5 36 L21 50 L52 22" stroke="#58d244" strokeWidth="3" fill="none" opacity="0.600" />
    <path d="M8 19 L22 34 L52 7" stroke="#b9b7e4" strokeWidth="3" fill="none" opacity="0.700" />
  </svg>
);
const SettingsTabIcon = () => (
  <svg width="48" height="48" viewBox="0 0 48 48">
    <Cog cx={24} cy={24} r={23.5} fill="#76817e" />
    <circle cx="24" cy="24" r="12" fill="none" stroke="#93a09c" strokeWidth="3" />
    <circle cx="24" cy="24" r="6.500" fill="#3c3f41" stroke="#59625f" strokeWidth="2" />
  </svg>
);

export default function App() {
  return (
    <Frame>
      <Global />
      <svg width="0" height="0" style={{ position: 'absolute' }}>
        <defs>
          <linearGradient id="play" x1="0" y1="0" x2="0.300" y2="1">
            <stop offset="0" stopColor="#6fae70" />
            <stop offset="0.450" stopColor="#2c7a2c" />
            <stop offset="0.550" stopColor="#04960a" />
            <stop offset="1" stopColor="#18d018" />
          </linearGradient>
        </defs>
      </svg>

      <Toolbar>
        {TOOLBAR.map((group, g) => (
          <React.Fragment key={g}>
            {g > 0 && <Separator />}
            <ButtonGroup>
              {group.map((b) => (
                <ToolButton key={b.name} $disabled={b.disabled}>
                  <Svg48>{ICONS[b.name]}</Svg48>
                </ToolButton>
              ))}
            </ButtonGroup>
          </React.Fragment>
        ))}
        <Timer>00:01:47</Timer>
        <WarningBox>
          <svg width="46" height="42" viewBox="0 0 46 42">
            <path d="M23 2 L45 38 H1 Z" fill="#e8c91c" stroke="#8c7510" strokeWidth="2" strokeLinejoin="round" />
            <path d="M0 39h46" stroke="#6e5c0c" strokeWidth="3" />
            <path d="M23 7 L38 34 H8 Z" fill="#f2d62a" stroke="#2a2508" strokeWidth="2" />
            <path d="M23 14v12M23 28.500v4.500" stroke="#1d1a08" strokeWidth="4.500" />
          </svg>
        </WarningBox>
      </Toolbar>

      <Body>
        <Tree>
          {NODES.map((n, k) => (
            <TreeRow key={k} $depth={n.d} $selected={n.sel} $muted={n.muted}>
              <ArrowSlot>{n.a && <Arrow kind={n.a} />}</ArrowSlot>
              <IconSlot>
                <svg width="38" height="38" viewBox="0 0 38 38" overflow="visible">{TREE_ICONS[n.i]}</svg>
              </IconSlot>
              <TreeText $ls={n.ls} $ws={n.num ? 4.6 : 0} $selected={n.sel}>
                {n.t}
                {n.num && <Digits>{n.num}</Digits>}
              </TreeText>
            </TreeRow>
          ))}
        </Tree>
        <Divider>
          <svg width="8" height="30" viewBox="0 0 8 30">
            {[0, 6, 12, 18, 24].map((y) => (
              <path key={y} d={`M6 ${y}h2v2h-2zM4 ${y + 2}h2v2h-2zM0 ${y + 1}h2v2h-2zM2 ${y + 4}h2v2h-2zM6 ${y + 4}h2v1h-2z`} fill="#c4c6c8" />
            ))}
          </svg>
        </Divider>

        <Main>
          <TitleBar>
            <Label $size={34} $ls={0.45}>jp@gc – PerfMon Metrics Collector</Label>
            <Expand>
              <svg width="32" height="36" viewBox="0 0 32 36">
                <rect x="2" y="4" width="40" height="27" fill="#44494b" stroke="#5a5e60" strokeWidth="1.500" />
                <path d="M0 2h10l-4 4 3 4-3 3-4-3-2 4zM0 34h10l-4-4 3-4-3-3-4 3-2-4z" fill="#5fae55" />
                <circle cx="21" cy="10" r="2.500" fill="#5fae55" /><circle cx="21" cy="26" r="2.500" fill="#5fae55" />
              </svg>
            </Expand>
          </TitleBar>

          <HeaderBox>
            <FieldRow $h={46}>
              <FieldLabel>名稱</FieldLabel>
              <NameField><Label $ls={0.9}>aps-test Chart</Label></NameField>
            </FieldRow>
            <FieldRow $h={32} $mt={11}>
              <FieldLabel>備註</FieldLabel>
              <CommentField />
            </FieldRow>
            <HelpRow>
              <svg width="28" height="28" viewBox="0 0 28 28">
                <circle cx="14" cy="14" r="13.500" fill="#3f6fae" />
                <circle cx="14" cy="14" r="11.500" fill="#6d9ed6" stroke="#b5d0ee" strokeWidth="1.500" />
                <path d="M12 7h4v3h-4zM11 12h5v8h2v2h-7v-2h1.500v-6h-1.500z" fill="#ffffff" />
              </svg>
              <HelpLink>Help on this plugin</HelpLink>
            </HelpRow>
          </HeaderBox>

          <Group $h={280} $mt={26}>
            <Legend><Label $ls={0.25}>Servers to Monitor (ServerAgent must be started, see help)</Label></Legend>
            <TableFrame>
              <TableGrid>
                <HeadRow>
                  {HEAD.map(([t, ls], k) => <HeadCell key={t} $ls={ls} $last={k === 3}>{t}</HeadCell>)}
                </HeadRow>
                {ROWS.map(([m, mls, p, pls], k) => (
                  <BodyRow key={k}>
                    <Cell $ls={2.05}>{HOST}</Cell>
                    <Cell $ls={1.9}>4444</Cell>
                    <Cell $ls={mls}>{m}</Cell>
                    <Cell $ls={pls} $last>{p}</Cell>
                  </BodyRow>
                ))}
              </TableGrid>
              <Scroll><Thumb /></Scroll>
            </TableFrame>
            <TableEdge />
            <RowButtons>
              <Button $w={566} $h={50}><Label $ls={0.38}>Add Row</Label></Button>
              <Button $w={566} $h={50}><Label $ls={0.71}>Copy Row</Label></Button>
              <Button $w={566} $h={50}><Label $ls={0.35}>Delete Row</Label></Button>
            </RowButtons>
          </Group>

          <Group $h={92} $mt={20}>
            <Legend><Label>將全部資料寫成檔案</Label></Legend>
            <FileRow>
              <FieldLabel>檔名</FieldLabel>
              <FileField />
              <Button $w={104} $h={45} $ml={17}><Label $size={20}>瀏覽...</Label></Button>
              <Spaced $w={230} $ml={17}><Label $ls={0.94}>Log/Display Only:</Label></Spaced>
              <Check $ml={14} />
              <Spaced $w={132} $ml={14}>只記錄錯誤</Spaced>
              <Check $ml={15} />
              <Spaced $w={130} $ml={12}><Label $ls={0.68}>Successes</Label></Spaced>
              <Button $w={98} $h={50} $ml={17}><Label>設定</Label></Button>
            </FileRow>
          </Group>

          <Tabs>
            <Tab $w={154} $pl={11} $gap={8} $active>
              <ChartTabIcon />
              <Label $ls={0.17}>Chart</Label>
            </Tab>
            <Tab $w={161} $pl={15} $gap={9}>
              <RowsTabIcon />
              <Label $ls={0.19}>Rows</Label>
            </Tab>
            <Tab $w={179} $pl={12} $gap={7}>
              <SettingsTabIcon />
              <Label $ls={0.27}>Settings</Label>
            </Tab>
          </Tabs>
          <Pane>
            <ChartFrame><Chart /></ChartFrame>
          </Pane>
        </Main>
      </Body>
      <EdgeShade />
    </Frame>
  );
}
